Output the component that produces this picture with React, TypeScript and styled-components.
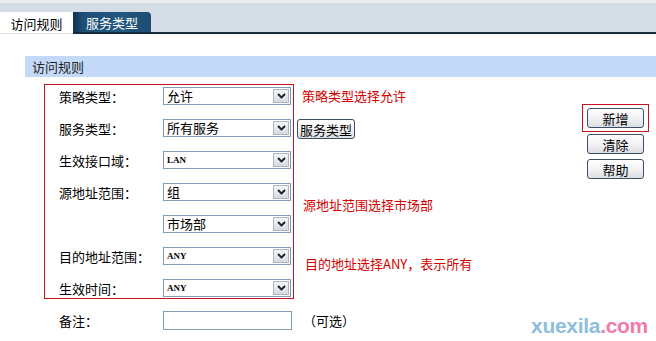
import React from "react";
import styled, { createGlobalStyle } from "styled-components";

const GlobalStyle = createGlobalStyle`
    html, body {
        margin: 0;
        padding: 0;
        background: #ffffff;
    }
    body {
        font-family: "Noto Sans CJK SC", "Liberation Sans", sans-serif;
        font-size: 13px;
        color: #000;
    }
`

const Page = styled.div`
    position: relative;
    width: 656px;
    height: 341px;
    overflow: hidden;
    background: #fff;
`

const TabBar = styled.div`
    display: flex;
    align-items: flex-end;
    height: 31px;
    background: #d4dde6;
    border-top: 3px solid #e9edf1;
`

const ActiveTab = styled.div`
    width: 73px;
    height: 22px;
    background: #fff;
    display: flex;
    align-items: center;
    justify-content: center;
    box-sizing: border-box;
    border-bottom: 1px solid #e2e2e2;
    padding-top: 2px;
`

const Tab = styled.div`
    width: 78px;
    height: 22px;
    box-sizing: border-box;
    display: flex;
    align-items: center;
    justify-content: center;
    color: #fff;
    background: linear-gradient(to right, #0e3150 0%, #1e4f78 12%, #23587f 60%, #1d4c72 100%);
    border-top-right-radius: 4px;
    border-bottom: 2px solid #14283a;
    padding-top: 1px;
`

const TabRest = styled.div`
    flex: 1;
    height: 2px;
    background: #1a2e3d;
`

const SectionHeader = styled.div`
    margin: 22px 0 0 25px;
    height: 21px;
    background: #c4d9f8;
    color: #222;
    display: flex;
    align-items: center;
    padding-left: 7px;
`

const Body = styled.div`
    display: flex;
    margin-top: 7px;
`

const FormArea = styled.div`
    display: flex;
    flex-direction: column;
    padding-left: 44px;
`

const FormTop = styled.div`
    display: flex;
`

const RedBox = styled.div`
    width: 250px;
    height: 215px;
    box-sizing: border-box;
    border: 1px solid #c8101e;
    padding: 2px 0 0 14px;
    display: flex;
    flex-direction: column;
    gap: 14px;
`

const Row = styled.div`
    display: flex;
    align-items: center;
    height: 18px;
`

const Label = styled.div`
    width: 104px;
    white-space: nowrap;
`

const SelectBox = styled.div`
    width: 128px;
    height: 18px;
    box-sizing: border-box;
    border: 1px solid #7f9db9;
    background: #fff;
    display: flex;
    align-items: center;
    justify-content: space-between;
`

const SelectText = styled.span<{ $latin?: boolean }>`
    padding-left: 3px;
    font-family: ${(p) => (p.$latin ? '"Liberation Serif", serif' : '"Noto Sans CJK SC", sans-serif')};
    font-size: ${(p) => (p.$latin ? "9px" : "13px")};
    font-weight: ${(p) => (p.$latin ? "bold" : "normal")};
    line-height: 16px;
`

const ArrowBtn = styled.div`
    width: 16px;
    height: 14px;
    margin-right: 1px;
    box-sizing: border-box;
    border: 1px solid #a9b5c6;
    background: linear-gradient(#f4f5f7, #d6dbe3);
    display: flex;
    align-items: center;
    justify-content: center;
`

const TextInput = styled.div`
    width: 129px;
    height: 19px;
    box-sizing: border-box;
    border: 1px solid #7f9db9;
    background: #fff;
`

const SideColumn = styled.div`
    display: flex;
    flex-direction: column;
    align-items: flex-start;
`

const Note = styled.div<{ $top: number; $left: number }>`
    color: #d40000;
    margin-top: ${(p) => p.$top}px;
    margin-left: ${(p) => p.$left}px;
    height: 18px;
    line-height: 18px;
    white-space: nowrap;
`

const Button = styled.button<{ $width?: number }>`
    width: ${(p) => p.$width ?? 57}px;
    height: 20px;
    padding: 0;
    font-family: "Noto Sans CJK SC", sans-serif;
    font-size: 13px;
    color: #000;
    border: 1px solid #3b4f66;
    border-radius: 3px;
    background: linear-gradient(#ffffff 0%, #f2f2f2 50%, #dcdee4 100%);
    display: flex;
    align-items: center;
    justify-content: center;
    line-height: 1;
`

const SideButton = styled(Button)`
    margin: 14px 0 0 3px;
`

const RemarkRow = styled.div`
    display: flex;
    align-items: center;
    margin: 12px 0 0 15px;
    height: 19px;
`

const Hint = styled.span`
    margin-left: 11px;
`

const ButtonColumn = styled.div`
    margin-left: auto;
    margin-right: 7px;
    padding-top: 20px;
    display: flex;
    flex-direction: column;
    align-items: center;
    gap: 5px;
`

const Highlight = styled.div`
    width: 67px;
    height: 28px;
    box-sizing: border-box;
    border: 1px solid #c8101e;
    display: flex;
    align-items: center;
    justify-content: center;
    margin-bottom: -3px;
`

const Watermark = styled.div`
    position: absolute;
    right: 8px;
    bottom: 3px;
    font-family: "Liberation Sans", Arial, sans-serif;
    font-weight: bold;
    font-size: 21px;
    letter-spacing: -0.3px;
    color: #8dbfdc;
    span {
        color: #f27aaa;
    }
`

const Chevron = () => (
    <svg width="9" height="6" viewBox="0 0 9 6">
        <path d="M1 1 L4.5 4.5 L8 1" fill="none" stroke="#1a1a1a" strokeWidth="1.8" />
    </svg>
)

const Select = ({ value, latin }: { value: string; latin?: boolean }) => (
    <SelectBox>
        <SelectText $latin={latin}>{value}</SelectText>
        <ArrowBtn>
            <Chevron />
        </ArrowBtn>
    </SelectBox>
)

const rows = [
    { label: "策略类型：", value: "允许" },
    { label: "服务类型：", value: "所有服务" },
    { label: "生效接口域：", value: "LAN", latin: true },
    { label: "源地址范围：", value: "组" },
    { label: "", value: "市场部" },
    { label: "目的地址范围：", value: "ANY", latin: true },
    { label: "生效时间：", value: "ANY", latin: true },
]

const App = () => {
    return (
        <Page>
            <GlobalStyle />
            <TabBar>
                <ActiveTab>访问规则</ActiveTab>
                <Tab>服务类型</Tab>
                <TabRest />
            </TabBar>
            <SectionHeader>访问规则</SectionHeader>
            <Body>
                <FormArea>
                    <FormTop>
                        <RedBox>
                            {rows.map((r, i) => (
                                <Row key={i}>
                                    <Label>{r.label}</Label>
                                    <Select value={r.value} latin={r.latin} />
                                </Row>
                            ))}
                        </RedBox>
                        <SideColumn>
                            <Note $top={3} $left={8}>策略类型选择允许</Note>
                            <SideButton $width={58}>服务类型</SideButton>
                            <Note $top={57} $left={9}>源地址范围选择市场部</Note>
                            <Note $top={41} $left={11}>目的地址选择ANY，表示所有</Note>
                        </SideColumn>
                    </FormTop>
                    <RemarkRow>
                        <Label>备注：</Label>
                        <TextInput />
                        <Hint>（可选）</Hint>
                    </RemarkRow>
                </FormArea>
                <ButtonColumn>
                    <Highlight>
                        <Button>新增</Button>
                    </Highlight>
                    <Button>清除</Button>
                    <Button>帮助</Button>
                </ButtonColumn>
            </Body>
            <Watermark>
                xuexila<span>.com</span>
            </Watermark>
        </Page>
    );
};

export default App;
